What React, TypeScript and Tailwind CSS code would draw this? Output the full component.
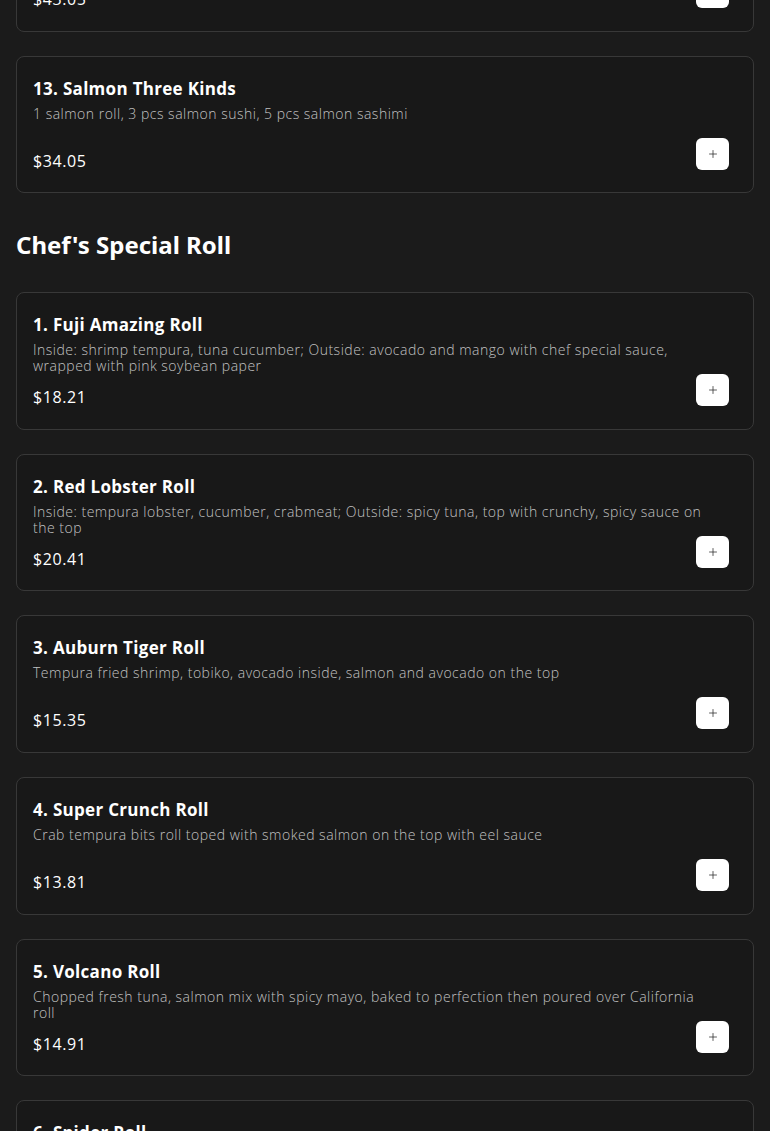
import { Plus } from "lucide-react";

interface Item {
  name: string;
  desc: string;
  price: string;
}

const PREV: Item[] = [
  {
    name: "12. Salmon Lover",
    desc: "1 salmon roll, 4 pcs salmon sushi, 6 pcs salmon sashimi",
    price: "$43.05",
  },
  {
    name: "13. Salmon Three Kinds",
    desc: "1 salmon roll, 3 pcs salmon sushi, 5 pcs salmon sashimi",
    price: "$34.05",
  },
];

const CHEF: Item[] = [
  {
    name: "1. Fuji Amazing Roll",
    desc: "Inside: shrimp tempura, tuna cucumber; Outside: avocado and mango with chef special sauce, wrapped with pink soybean paper",
    price: "$18.21",
  },
  {
    name: "2. Red Lobster Roll",
    desc: "Inside: tempura lobster, cucumber, crabmeat; Outside: spicy tuna, top with crunchy, spicy sauce on the top",
    price: "$20.41",
  },
  {
    name: "3. Auburn Tiger Roll",
    desc: "Tempura fried shrimp, tobiko, avocado inside, salmon and avocado on the top",
    price: "$15.35",
  },
  {
    name: "4. Super Crunch Roll",
    desc: "Crab tempura bits roll toped with smoked salmon on the top with eel sauce",
    price: "$13.81",
  },
  {
    name: "5. Volcano Roll",
    desc: "Chopped fresh tuna, salmon mix with spicy mayo, baked to perfection then poured over California roll",
    price: "$14.91",
  },
  {
    name: "6. Spider Roll",
    desc: "Soft shell crab tempura, cucumber, avocado, tobiko with eel sauce",
    price: "$14.25",
  },
];

function MenuCard({ item }: { item: Item }) {
  return (
    <div className="rounded-lg border border-[#383838] bg-[#181818] px-4 pt-5 pb-[19.6px]">
      <h3 className="text-[17px] leading-6 font-bold tracking-[0.3px] text-white">
        {item.name}
      </h3>
      <p className="mt-[5px] h-8 pr-8 text-[14px] leading-4 font-light tracking-[0.5px] text-[#c2c2c2]">
        {item.desc}
      </p>
      <div className="flex items-start justify-between">
        <span className="mt-[11px] text-[16px] leading-6 tracking-[0.6px] text-white">
          {item.price}
        </span>
        <button className="mr-2 flex h-8 w-[33px] items-center justify-center rounded-md bg-white text-[#2a2a2a]">
          <Plus size={12} strokeWidth={1.5} />
        </button>
      </div>
    </div>
  );
}

export default function App() {
  return (
    <div
      className="min-h-screen overflow-hidden bg-[#1b1b1b] px-4"
      style={{ fontFamily: '"Open Sans", "Noto Sans", sans-serif' }}
    >
      <div className="-mt-[106px] flex flex-col gap-6">
        {PREV.map((it) => (
          <MenuCard key={it.name} item={it} />
        ))}
      </div>

      {/* Chef's special */}
      <h2 className="mt-[36px] mb-[31px] font-['Noto_Sans',sans-serif] text-[24px] leading-8 font-bold text-white">
        Chef's Special Roll
      </h2>
      <div className="flex flex-col gap-6 pb-10">
        {CHEF.map((it) => (
          <MenuCard key={it.name} item={it} />
        ))}
      </div>
    </div>
  );
}
